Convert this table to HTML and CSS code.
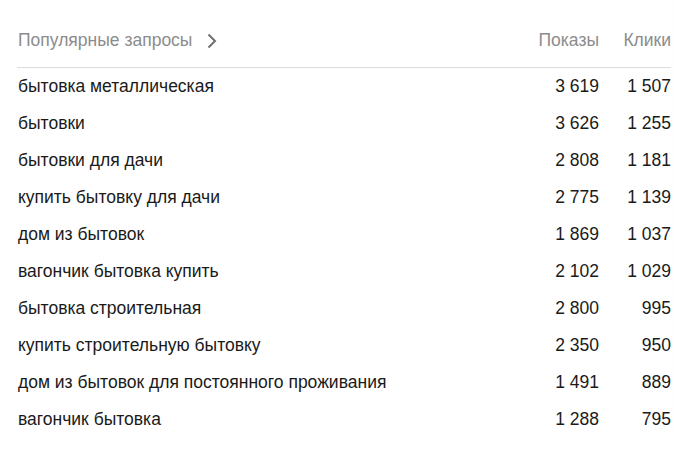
FILE: index.html
```html
<!DOCTYPE html>
<html lang="ru">
<head>
  <meta charset="UTF-8" />
  <title>Популярные запросы</title>
  <link rel="stylesheet" href="styles.css">
</head>
<body>
  <div class="card">
    <div class="table-head">
      <div class="col-query head-query">
        <span class="head-title">Популярные запросы</span>
        <svg class="chevron" width="10" height="16" viewBox="0 0 10 16"><path d="M1.5 1.5 L8 8 L1.5 14.5" fill="none" stroke="#707070" stroke-width="2"/></svg>
      </div>
      <div class="col-num">Показы</div>
      <div class="col-clicks">Клики</div>
    </div>
    <div class="row"><div class="col-query">бытовка металлическая</div><div class="col-num">3 619</div><div class="col-clicks">1 507</div></div>
    <div class="row"><div class="col-query">бытовки</div><div class="col-num">3 626</div><div class="col-clicks">1 255</div></div>
    <div class="row"><div class="col-query">бытовки для дачи</div><div class="col-num">2 808</div><div class="col-clicks">1 181</div></div>
    <div class="row"><div class="col-query">купить бытовку для дачи</div><div class="col-num">2 775</div><div class="col-clicks">1 139</div></div>
    <div class="row"><div class="col-query">дом из бытовок</div><div class="col-num">1 869</div><div class="col-clicks">1 037</div></div>
    <div class="row"><div class="col-query">вагончик бытовка купить</div><div class="col-num">2 102</div><div class="col-clicks">1 029</div></div>
    <div class="row"><div class="col-query">бытовка строительная</div><div class="col-num">2 800</div><div class="col-clicks">995</div></div>
    <div class="row"><div class="col-query">купить строительную бытовку</div><div class="col-num">2 350</div><div class="col-clicks">950</div></div>
    <div class="row"><div class="col-query">дом из бытовок для постоянного проживания</div><div class="col-num">1 491</div><div class="col-clicks">889</div></div>
    <div class="row"><div class="col-query">вагончик бытовка</div><div class="col-num">1 288</div><div class="col-clicks">795</div></div>
  </div>
</body>
</html>
```

FILE: styles.css
```css
* { margin: 0; padding: 0; box-sizing: border-box; }
body {
  font-family: 'Liberation Sans', Arial, sans-serif;
  font-size: 17.5px;
  color: #222;
  background: #fff;
  overflow: hidden;
}
.card {
  width: 671px;
  padding-left: 18px;
  min-height: 450px;
  box-shadow: -6px -6px 14px rgba(0, 0, 0, 0.04);
}
.table-head {
  display: flex;
  align-items: center;
  padding: 28px 0 15px;
  line-height: 24px;
  color: #8c8c8c;
  border-bottom: 1px solid #dcdcdc;
  margin-left: -1px;
  padding-left: 1px;
}
.head-query { display: flex; align-items: center; gap: 15px; }
.head-title { color: #8c8c8c; }
.chevron { display: block; margin-top: 1px; }
.col-query { flex: 1; white-space: nowrap; }
.col-num { width: 120px; text-align: right; }
.col-clicks { width: 72px; text-align: right; }
.row {
  display: flex;
  height: 37px;
  line-height: 37px;
  color: #1a1a1a;
}
```
